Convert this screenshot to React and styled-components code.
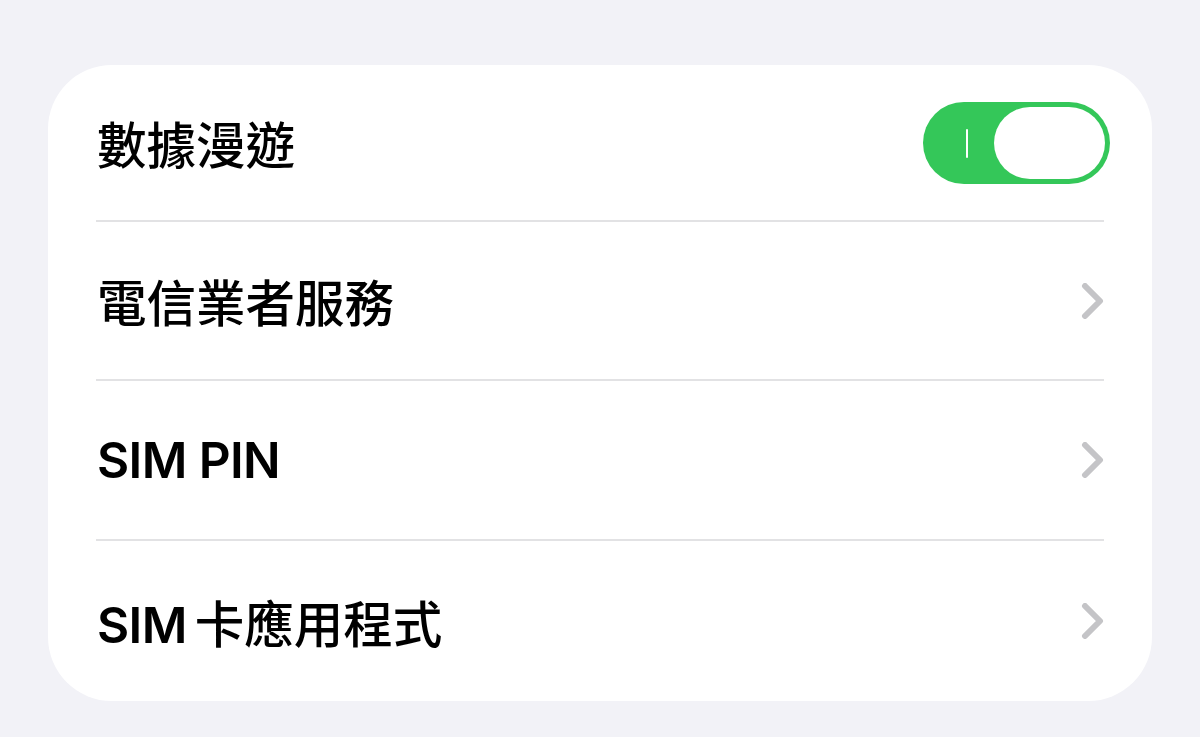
import React from "react";
import styled, { createGlobalStyle } from "styled-components";

const GlobalStyle = createGlobalStyle`
  html, body {
    margin: 0;
    padding: 0;
    background: #f2f2f7;
  }
  body {
    font-family: Inter, "Noto Sans CJK TC", sans-serif;
  }
`;

const Page = styled.div`
  min-height: 737px;
  padding: 65px 48px 0;
  box-sizing: border-box;
`;

const Card = styled.div`
  background: #fff;
  border-radius: 64px;
  padding: 0 48px;
  overflow: hidden;
`;

const Row = styled.div`
  display: flex;
  align-items: center;
  justify-content: space-between;
  height: ${(p) => p.h || 158}px;
  border-bottom: ${(p) => (p.last ? "none" : "2.5px solid #e2e2e4")};
  box-sizing: border-box;
`;

const Label = styled.span`
  font-family: Inter, "Noto Sans CJK TC", sans-serif;
  font-size: 49.5px;
  font-weight: 500;
  color: #000;
  padding-left: 1px;
`;

const Latin = styled.span`
  font-weight: 600;
  letter-spacing: -0.6px;
  margin-right: ${(p) => p.gap || 0}px;
`;

const Track = styled.div`
  position: relative;
  width: 187px;
  height: 82px;
  border-radius: 41px;
  background: #34c759;
  margin-right: -6px;
  display: flex;
  align-items: center;
  justify-content: flex-end;
  padding: 0 5px;
  box-sizing: border-box;
`;

const OnMark = styled.span`
  position: absolute;
  left: 43px;
  top: 27px;
  width: 2px;
  height: 29px;
  background: #fff;
  border-radius: 1px;
`;

const Knob = styled.div`
  width: 111px;
  height: 72px;
  border-radius: 36px;
  background: #fff;
`;

const Chevron = () => (
  <svg width="24" height="36" viewBox="0 0 24 36" style={{ marginRight: -1 }}>
    <path
      d="M4 3 L19 18 L4 33"
      fill="none"
      stroke="#c4c4c7"
      strokeWidth="6"
      strokeLinecap="round"
      strokeLinejoin="round"
    />
  </svg>
);

const Toggle = () => (
  <Track>
    <OnMark />
    <Knob />
  </Track>
);

export default function App() {
  return (
    <>
      <GlobalStyle />
      <Page>
        <Card>
          <Row h={157}>
            <Label>數據漫遊</Label>
            <Toggle />
          </Row>
          <Row h={159}>
            <Label>電信業者服務</Label>
            <Chevron />
          </Row>
          <Row h={160}>
            <Label>
              <Latin>SIM PIN</Latin>
            </Label>
            <Chevron />
          </Row>
          <Row h={160} last>
            <Label>
              <Latin gap={8}>SIM</Latin>卡應用程式
            </Label>
            <Chevron />
          </Row>
        </Card>
      </Page>
    </>
  );
}
